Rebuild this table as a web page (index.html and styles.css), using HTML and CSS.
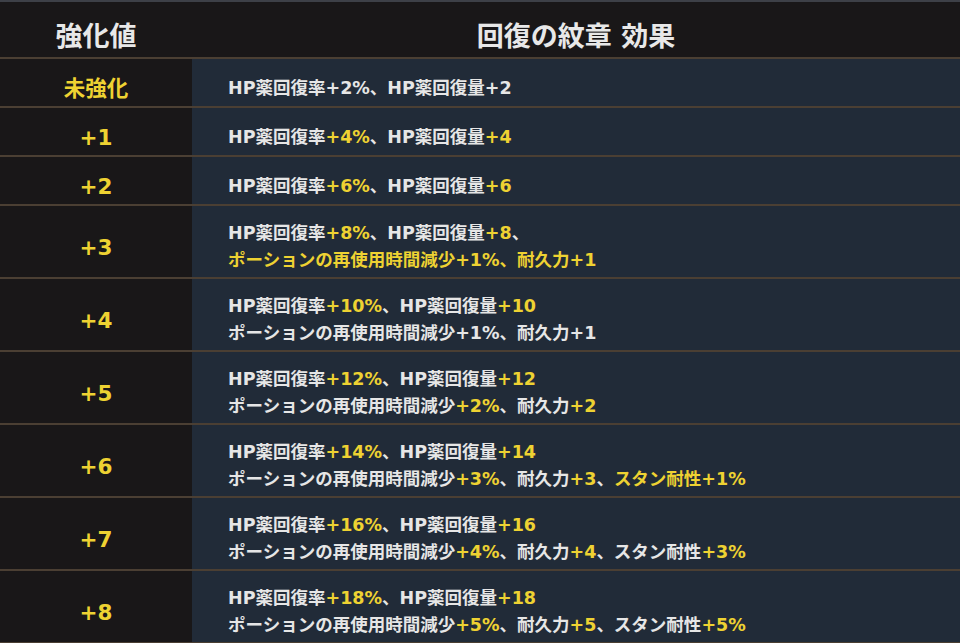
FILE: index.html
```html
<!DOCTYPE html>
<html lang="ja">
<head>
<meta charset="utf-8">
<link rel="stylesheet" href="styles.css">
</head>
<body>
<table class="tbl">
  <thead>
    <tr><th class="c-lv">強化値</th><th class="c-fx">回復の紋章 効果</th></tr>
  </thead>
  <tbody>
    <tr><td class="lv">未強化</td><td class="fx">HP薬回復率+2%、HP薬回復量+2</td></tr>
    <tr><td class="lv">+1</td><td class="fx">HP薬回復率<span class="y">+4%</span>、HP薬回復量<span class="y">+4</span></td></tr>
    <tr><td class="lv">+2</td><td class="fx">HP薬回復率<span class="y">+6%</span>、HP薬回復量<span class="y">+6</span></td></tr>
    <tr><td class="lv">+3</td><td class="fx">HP薬回復率<span class="y">+8%</span>、HP薬回復量<span class="y">+8</span>、<br><span class="y">ポーションの再使用時間減少+1%、耐久力+1</span></td></tr>
    <tr><td class="lv">+4</td><td class="fx">HP薬回復率<span class="y">+10%</span>、HP薬回復量<span class="y">+10</span><br>ポーションの再使用時間減少+1%、耐久力+1</td></tr>
    <tr><td class="lv">+5</td><td class="fx">HP薬回復率<span class="y">+12%</span>、HP薬回復量<span class="y">+12</span><br>ポーションの再使用時間減少<span class="y">+2%</span>、耐久力<span class="y">+2</span></td></tr>
    <tr><td class="lv">+6</td><td class="fx">HP薬回復率<span class="y">+14%</span>、HP薬回復量<span class="y">+14</span><br>ポーションの再使用時間減少<span class="y">+3%</span>、耐久力<span class="y">+3</span>、<span class="y">スタン耐性+1%</span></td></tr>
    <tr><td class="lv">+7</td><td class="fx">HP薬回復率<span class="y">+16%</span>、HP薬回復量<span class="y">+16</span><br>ポーションの再使用時間減少<span class="y">+4%</span>、耐久力<span class="y">+4</span>、スタン耐性<span class="y">+3%</span></td></tr>
    <tr><td class="lv">+8</td><td class="fx">HP薬回復率<span class="y">+18%</span>、HP薬回復量<span class="y">+18</span><br>ポーションの再使用時間減少<span class="y">+5%</span>、耐久力<span class="y">+5</span>、スタン耐性<span class="y">+5%</span></td></tr>
  </tbody>
</table>
</body>
</html>
```
FILE: styles.css
```css
html, body {
  margin: 0;
  padding: 0;
  background: #191718;
}
body {
  font-family: "DejaVu Sans", "Noto Sans CJK JP", sans-serif;
  font-weight: 700;
  color: #e6e6e6;
}
.tbl {
  width: 960px;
  border-collapse: collapse;
  border-top: 2px solid #3d4047;
}
.tbl th {
  background: #191718;
  color: #e8e8e8;
  font-size: 27px;
  line-height: 38px;
  padding: 16px 0 1px;
  text-align: center;
  border-bottom: 2px solid #4b3f33;
}
.c-lv { width: 192px; }
.tbl td {
  border-bottom: 2px solid #4b3f33;
  vertical-align: middle;
}
.lv {
  width: 192px;
  background: #191718;
  color: #eed232;
  font-size: 21.5px;
  line-height: 30px;
  padding: 15px 0 2px;
  text-align: center;
}
.fx {
  background: #212b38;
  font-size: 17.5px;
  line-height: 27px;
  padding: 14px 0 3px 36px;
  text-align: left;
}
.y { color: #eed232; }
```
